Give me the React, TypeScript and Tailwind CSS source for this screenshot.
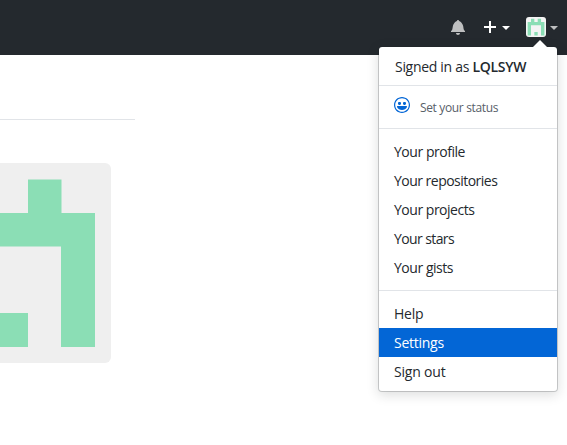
type LinkItem = { label: string; tracking: string; active?: boolean };

const yourLinks: LinkItem[] = [
  { label: "Your profile", tracking: "tracking-[-0.46px]" },
  { label: "Your repositories", tracking: "tracking-[-0.52px]" },
  { label: "Your projects", tracking: "tracking-[-0.48px]" },
  { label: "Your stars", tracking: "tracking-[-0.6px]" },
  { label: "Your gists", tracking: "tracking-[-0.46px]" },
];

const siteLinks: LinkItem[] = [
  { label: "Help", tracking: "tracking-[-0.2px]" },
  { label: "Settings", tracking: "tracking-[-0.26px]", active: true },
  { label: "Sign out", tracking: "tracking-[-0.2px]" },
];

function Identicon({ className, background }: { className: string; background: string }) {
  return (
    <svg viewBox="0 0 200 200" className={className} aria-hidden="true">
      <rect width="200" height="200" fill={background} />
      <path
        fill="#8bdeb5"
        d="M50 16.5h33.5V50h33.5V16.5h33.5V50H184v134h-34V83.500H50V184H16.500V50H50zM83.500 150H117v34H83.500z"
      />
    </svg>
  );
}

function Caret({ className }: { className: string }) {
  return (
    <svg viewBox="0 0 8 4" className={`mt-0.5 h-1 w-2 ${className}`} fill="currentColor" aria-hidden="true">
      <path d="M0 0h8L4 4z" />
    </svg>
  );
}

function MenuLinks({ items }: { items: LinkItem[] }) {
  return (
    <>
      {items.map((item) => (
        <a
          key={item.label}
          className={`block h-[29px] pl-[15px] text-sm leading-[29px] ${item.tracking} ${
            item.active ? "bg-[#0366d6] text-white" : "text-[#24292e]"
          }`}
        >
          {item.label}
        </a>
      ))}
    </>
  );
}

function UserMenu() {
  return (
    <div className="absolute top-[46px] right-[9px] h-[346px] w-[180px] rounded border border-[#1b1f23]/20 bg-white bg-clip-padding text-[#24292e] shadow-[0_3px_12px_rgba(27,31,35,0.15)]">
      <svg viewBox="0 0 14 7" className="absolute -top-[7px] right-[10px] h-[7px] w-[14px]" aria-hidden="true">
        <path d="M0 7L7 0l7 7z" fill="#fff" />
      </svg>
      <div className="h-[39px] border-b border-[#e1e4e8] pl-4 text-sm leading-[40px] tracking-[-0.3px]">
        Signed in as <strong className="font-semibold">LQLSYW</strong>
      </div>
      <div className="flex h-[43px] items-start border-b border-[#e1e4e8] pt-[11px] pl-[15px]">
        <svg viewBox="0 0 16 16" className="h-4 w-4" fill="#0366d6" aria-hidden="true">
          <path d="M8 0C3.580 0 0 3.580 0 8s3.580 8 8 8 8-3.580 8-8-3.580-8-8-8zm4.810 12.810a6.720 6.720 0 0 1-2.170 1.450c-.83.36-1.720.53-2.640.53-.92 0-1.810-.17-2.640-.53-.81-.34-1.550-.83-2.170-1.450a6.773 6.773 0 0 1-1.450-2.170A6.590 6.590 0 0 1 1.210 8c0-.92.17-1.810.53-2.640.34-.81.83-1.550 1.450-2.170.62-.62 1.360-1.110 2.170-1.450A6.590 6.590 0 0 1 8 1.210c.92 0 1.810.17 2.640.53.81.34 1.550.83 2.170 1.450.62.62 1.110 1.360 1.450 2.170.36.83.53 1.720.53 2.640 0 .92-.17 1.810-.53 2.640-.34.81-.83 1.550-1.450 2.170zM4 6.800v-.59c0-.66.53-1.190 1.200-1.190h.59c.66 0 1.190.53 1.190 1.190v.59c0 .67-.53 1.190-1.190 1.190H5.200C4.530 8 4 7.470 4 6.800zm5 0v-.59c0-.66.53-1.190 1.200-1.190h.59c.66 0 1.190.53 1.190 1.190v.59c0 .67-.53 1.190-1.190 1.190h-.59C9.530 8 9 7.470 9 6.800zm4 3.200c-.72 1.880-2.910 3-5 3s-4.280-1.130-5-3c-.14-.39.23-1 .66-1h8.590c.41 0 .89.61.75 1z" />
        </svg>
        <span className="ml-[10px] text-xs leading-[22px] tracking-[-0.35px] text-[#586069]">Set your status</span>
      </div>
      <div className="h-[162px] border-b border-[#e1e4e8] pt-[8px]">
        <MenuLinks items={yourLinks} />
      </div>
      <div className="pt-[8px]">
        <MenuLinks items={siteLinks} />
      </div>
    </div>
  );
}

export default function App() {
  return (
    <div className="h-[445px] w-[567px] overflow-hidden bg-white font-['Open_Sans','Noto_Sans',sans-serif] text-[#24292e]">
      <header className="relative z-10 flex h-[55px] items-center justify-end bg-[#24292e] pr-[9px] pb-px text-white">
        <svg viewBox="0 0 14 16" className="mr-[19px] h-4 w-3.5 text-[#bebfc0]" fill="currentColor" aria-hidden="true">
          <path d="M14 12v1H0v-1l.73-.58c.77-.77.81-2.550 1.190-4.420C2.690 3.230 6 2 6 2c0-.55.45-1 1-1s1 .45 1 1c0 0 3.390 1.230 4.160 5 .38 1.880.42 3.660 1.190 4.420l.66.58H14zm-7 4c1.110 0 2-.89 2-2H5c0 1.110.89 2 2 2z" />
        </svg>
        <svg viewBox="0 0 12 16" className="mr-1.5 h-4 w-3" fill="currentColor" aria-hidden="true">
          <path d="M12 9H7v5H5V9H0V7h5V2h2v5h5v2z" />
        </svg>
        <Caret className="mr-4" />
        <Identicon className="mr-1 h-5 w-5 rounded-[3px]" background="#f4f4f4" />
        <Caret className="text-[#bebfc0]" />
        <UserMenu />
      </header>
      <main>
        <div className="h-[65px] w-[135px] border-b border-[#e1e4e8]" />
        <Identicon className="-ml-[89px] mt-[43px] h-[200px] w-[200px] rounded-md" background="#efefef" />
      </main>
    </div>
  );
}
